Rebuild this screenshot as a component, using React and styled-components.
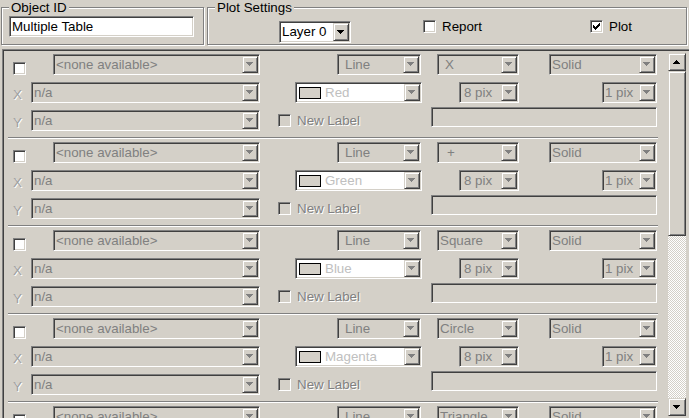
import React from 'react';
import styled, { createGlobalStyle, css } from 'styled-components';

const GlobalStyle = createGlobalStyle`
  html, body { margin: 0; padding: 0; background: #d4d0c8; }
  #root { width: 689px; height: 418px; overflow: hidden; }
`;

const sunken = css`
  border: 1px solid;
  border-color: #808080 #fff #fff #808080;
  box-shadow: inset 1px 1px 0 #404040, inset -1px -1px 0 #d4d0c8;
`;

const raised = css`
  border: 1px solid;
  border-color: #d4d0c8 #404040 #404040 #d4d0c8;
  box-shadow: inset 1px 1px 0 #fff, inset -1px -1px 0 #808080;
  background: #d4d0c8;
`;

const Window = styled.div`
  width: 689px;
  height: 418px;
  overflow: hidden;
  background: #d4d0c8;
  display: flex;
  flex-direction: column;
  font-family: "Liberation Sans", Arial, sans-serif;
  font-size: 13.33px;
  color: #000;
`;

const TopBar = styled.div`
  flex: none;
  height: 49px;
  box-sizing: border-box;
  padding: 7px 0 0 1px;
  display: flex;
  align-items: flex-start;
`;

const Frame = styled.div`
  position: relative;
  box-sizing: border-box;
  width: ${(p) => p.$w}px;
  height: 38px;
  margin-left: ${(p) => p.$ml || 0}px;
  padding: ${(p) => p.$pad};
  border: 1px solid #808080;
  box-shadow: inset 1px 1px 0 #fff, 1px 1px 0 #fff;
  display: flex;
  align-items: flex-start;
`;

const Legend = styled.span`
  position: absolute;
  top: -8px;
  left: 7px;
  padding: 0 2px;
  background: #d4d0c8;
  line-height: 15px;
  white-space: nowrap;
`;

const TextInput = styled.div`
  box-sizing: border-box;
  width: 185px;
  height: 21px;
  ${sunken};
  background: #fff;
  padding: 1px 2px;
  line-height: 17px;
  white-space: nowrap;
`;

const ComboShell = styled.div`
  box-sizing: border-box;
  flex: none;
  width: ${(p) => p.$w}px;
  height: ${(p) => p.$h || 21}px;
  margin-left: ${(p) => p.$ml || 0}px;
  margin-top: ${(p) => p.$mt || 0}px;
  ${sunken};
  padding: 1px;
  background: ${(p) => (p.$white ? '#fff' : '#d4d0c8')};
  display: flex;
  align-items: stretch;
`;

const ComboText = styled.span`
  flex: 1;
  min-width: 0;
  overflow: hidden;
  white-space: pre;
  padding-left: ${(p) => p.$indent ?? 1}px;
  color: ${(p) => p.$color || '#808080'};
  line-height: ${(p) => p.$lh || 17}px;
`;

const DropButton = styled.span`
  box-sizing: border-box;
  flex: none;
  width: 16px;
  ${raised};
  display: flex;
  align-items: center;
  justify-content: center;
`;

const Swatch = styled.span`
  flex: none;
  align-self: center;
  box-sizing: border-box;
  width: 22px;
  height: 12px;
  margin-left: 2px;
  border: 1px solid #000;
  background: #d4d0c8;
`;

const Arrow = ({ dir = 'down', color = '#808080' }) => (
  <svg width="8" height="5" viewBox="0 0 8 5" shapeRendering="crispEdges">
    <path
      d={
        dir === 'down'
          ? 'M0 0H7V1H6V2H5V3H4V4H3V3H2V2H1V1H0Z'
          : 'M3 0H4V1H5V2H6V3H7V4H0V3H1V2H2V1H3Z'
      }
      fill={color}
    />
  </svg>
);

const CheckMark = () => (
  <svg width="7" height="7" viewBox="0 0 7 7" shapeRendering="crispEdges">
    <g fill="#000">
      <rect x="6" y="0" width="1" height="1" />
      <rect x="5" y="1" width="2" height="1" />
      <rect x="0" y="2" width="1" height="1" />
      <rect x="4" y="2" width="3" height="1" />
      <rect x="0" y="3" width="2" height="1" />
      <rect x="3" y="3" width="3" height="1" />
      <rect x="0" y="4" width="5" height="1" />
      <rect x="1" y="5" width="3" height="1" />
      <rect x="2" y="6" width="1" height="1" />
    </g>
  </svg>
);

const CheckBox = styled.span`
  box-sizing: border-box;
  flex: none;
  width: 13px;
  height: 13px;
  margin-left: ${(p) => p.$ml || 0}px;
  align-self: ${(p) => p.$align || 'auto'};
  ${sunken};
  background: ${(p) => (p.$disabled ? '#d4d0c8' : '#fff')};
  display: flex;
  align-items: center;
  justify-content: center;
`;

const CheckItem = styled.div`
  flex: none;
  display: flex;
  align-items: center;
  gap: 6px;
  height: 13px;
  width: ${(p) => (p.$w ? `${p.$w}px` : 'auto')};
  margin-left: ${(p) => p.$ml || 0}px;
`;

const CheckText = styled.span`
  line-height: 15px;
  white-space: nowrap;
  color: ${(p) => (p.$disabled ? '#808080' : '#000')};
  text-shadow: ${(p) => (p.$disabled ? '1px 1px 0 #fff' : 'none')};
`;

const Panel = styled.div`
  flex: 1;
  min-height: 0;
  margin-left: 2px;
  border-left: 1px solid #808080;
  border-top: 1px solid #808080;
  box-shadow: inset 1px 1px 0 #404040;
  padding: 1px 0 0 1px;
  display: flex;
  align-items: flex-start;
  overflow: hidden;
`;

const List = styled.div`
  flex: 1;
  min-width: 0;
  display: flex;
  flex-direction: column;
`;

const Group = styled.div`
  flex: none;
  padding-top: 3px;
  display: flex;
  flex-direction: column;
`;

const Row = styled.div`
  display: flex;
  height: 21px;
  align-items: stretch;
  & + & {
    margin-top: 7px;
  }
`;

const AxisLabel = styled.span`
  box-sizing: border-box;
  flex: none;
  width: 27px;
  padding: 5px 0 0 9px;
  line-height: 16px;
  color: #a0a0a0;
  text-shadow: 1px 1px 0 #fff;
`;

const NewLabelCell = styled.div`
  flex: none;
  width: 153px;
  margin-left: 18px;
  display: flex;
  align-items: center;
  gap: 6px;
`;

const DisabledField = styled.div`
  box-sizing: border-box;
  flex: none;
  width: ${(p) => p.$w}px;
  height: 20px;
  margin-top: -3px;
  align-self: flex-start;
  ${sunken};
  background: #d4d0c8;
`;

const Separator = styled.div`
  height: 0;
  margin: 6px 10px 0 4px;
  border-top: 1px solid #808080;
  border-bottom: 1px solid #fff;
`;

const ScrollBar = styled.div`
  flex: none;
  width: 18px;
  height: 363px;
  margin: 2px 3px 0 0;
  display: flex;
  flex-direction: column;
`;

const ScrollButton = styled.div`
  box-sizing: border-box;
  flex: none;
  height: 18px;
  ${raised};
  display: flex;
  align-items: center;
  justify-content: center;
`;

const Thumb = styled.div`
  box-sizing: border-box;
  flex: none;
  height: 165px;
  ${raised};
`;

const Track = styled.div`
  flex: 1;
  background-color: #d4d0c8;
  background-image: conic-gradient(#fff 25%, #d4d0c8 0 50%, #fff 0 75%, #d4d0c8 0);
  background-size: 2px 2px;
`;

function ComboBox({ w, h, ml, mt, white, text, indent, color, lh, arrowColor, swatch }) {
  return (
    <ComboShell $w={w} $h={h} $ml={ml} $mt={mt} $white={white}>
      {swatch && <Swatch />}
      <ComboText $indent={indent} $color={color} $lh={lh}>
        {text}
      </ComboText>
      <DropButton>
        <Arrow dir="down" color={arrowColor || '#808080'} />
      </DropButton>
    </ComboShell>
  );
}

const series = [
  { marker: 'X', markerIndent: 6, color: 'Red' },
  { marker: '+', markerIndent: 8, color: 'Green' },
  { marker: 'Square', markerIndent: 1, color: 'Blue' },
  { marker: 'Circle', markerIndent: 1, color: 'Magenta' },
  { marker: 'Triangle', markerIndent: 1, color: 'Cyan' },
];

function SeriesGroup({ marker, markerIndent, color }) {
  return (
    <Group>
      <Row>
        <CheckBox $ml={9} $align="flex-end" />
        <ComboBox w={207} ml={27} text="<none available>" />
        <ComboBox w={84} ml={77} text="Line" indent={6} />
        <ComboBox w={82} ml={16} text={marker} indent={markerIndent} />
        <ComboBox w={108} ml={30} text="Solid" />
      </Row>
      <Row>
        <AxisLabel>X</AxisLabel>
        <ComboBox w={229} text="n/a" />
        <ComboBox w={127} ml={35} white swatch text={color} indent={4} color="#c0c0c0" />
        <ComboBox w={60} ml={37} text="8 pix" indent={3} />
        <ComboBox w={55} ml={83} text="1 pix" />
      </Row>
      <Row>
        <AxisLabel>Y</AxisLabel>
        <ComboBox w={229} text="n/a" />
        <NewLabelCell>
          <CheckBox $disabled />
          <CheckText $disabled>New Label</CheckText>
        </NewLabelCell>
        <DisabledField $w={226} />
      </Row>
      <Separator />
    </Group>
  );
}

export default function App() {
  return (
    <>
      <GlobalStyle />
      <Window>
        <TopBar>
          <Frame $w={203} $pad="8px 0 0 7px">
            <Legend>Object ID</Legend>
            <TextInput>Multiple Table</TextInput>
          </Frame>
          <Frame $w={480} $ml={3} $pad="12px 0 0 71px">
            <Legend>Plot Settings</Legend>
            <ComboBox
              w={72}
              h={22}
              mt={1}
              white
              text="Layer 0"
              color="#000"
              indent={1}
              lh={18}
              arrowColor="#000"
            />
            <CheckItem $w={167} $ml={72}>
              <CheckBox />
              <CheckText>Report</CheckText>
            </CheckItem>
            <CheckItem>
              <CheckBox>
                <CheckMark />
              </CheckBox>
              <CheckText>Plot</CheckText>
            </CheckItem>
          </Frame>
        </TopBar>
        <Panel>
          <List>
            {series.map((s) => (
              <SeriesGroup key={s.marker} {...s} />
            ))}
          </List>
          <ScrollBar>
            <ScrollButton>
              <Arrow dir="up" color="#000" />
            </ScrollButton>
            <Thumb />
            <Track />
            <ScrollButton>
              <Arrow dir="down" color="#000" />
            </ScrollButton>
          </ScrollBar>
        </Panel>
      </Window>
    </>
  );
}
